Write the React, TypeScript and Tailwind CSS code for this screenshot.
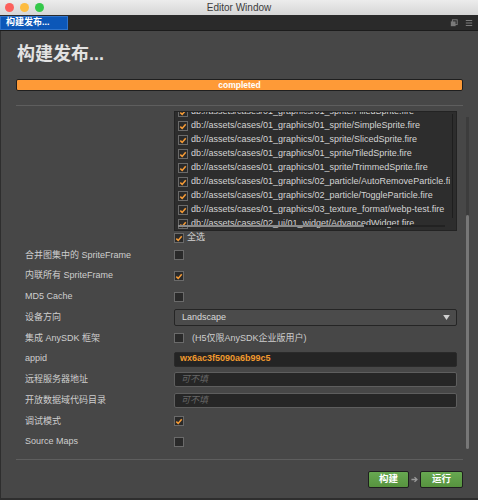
import React from "react";

const files = [
  "db://assets/cases/01_graphics/01_sprite/FilledSprite.fire",
  "db://assets/cases/01_graphics/01_sprite/SimpleSprite.fire",
  "db://assets/cases/01_graphics/01_sprite/SlicedSprite.fire",
  "db://assets/cases/01_graphics/01_sprite/TiledSprite.fire",
  "db://assets/cases/01_graphics/01_sprite/TrimmedSprite.fire",
  "db://assets/cases/01_graphics/02_particle/AutoRemoveParticle.fire",
  "db://assets/cases/01_graphics/02_particle/ToggleParticle.fire",
  "db://assets/cases/01_graphics/03_texture_format/webp-test.fire",
  "db://assets/cases/02_ui/01_widget/AdvancedWidget.fire",
];

const Check = ({ checked }: { checked?: boolean }) => (
  <span className="flex h-[10px] w-[10px] shrink-0 items-center justify-center border border-[#6a6a6a] bg-[#2a2a2a]">
    {checked && (
      <svg viewBox="0 0 10 10" className="h-[9px] w-[9px]">
        <path d="M1.6 5.2 L4 7.4 L8.4 2.2" stroke="#f59b36" strokeWidth="1.9" fill="none" />
      </svg>
    )}
  </span>
);

const Row = ({ label, children }: { label: string; children?: React.ReactNode }) => (
  <div className="flex h-[20.75px] items-center">
    <div className="w-[158px] pl-[9px] text-[9px] text-[#cecece]">{label}</div>
    <div className="flex flex-1 items-center pr-[7px]">{children}</div>
  </div>
);

export default function App() {
  return (
    <div className="flex h-[500px] w-[478px] flex-col overflow-hidden bg-[#474747] font-['Liberation_Sans','Noto_Sans_CJK_SC',sans-serif]">
      {/* title bar */}
      <div className="relative flex h-[15px] items-center justify-center bg-gradient-to-b from-[#ececec] to-[#d6d6d6]">
        <div className="absolute left-[5px] top-[3px] flex gap-[6px]">
          <span className="h-[9px] w-[9px] rounded-full bg-[#fc605c]" />
          <span className="h-[9px] w-[9px] rounded-full bg-[#fdbc40]" />
          <span className="h-[9px] w-[9px] rounded-full bg-[#34c84a]" />
        </div>
        <span className="text-[10px] text-[#3c3c3c]">Editor Window</span>
      </div>

      {/* tab bar */}
      <div className="flex h-[16px] items-stretch border-b border-[#1c1c1c] bg-[#2a2a2a]">
        <div className="mt-px flex w-[68px] items-center border border-[#2f74cc] bg-[#0c57b8] pl-[5px] text-[9px] font-bold text-white">
          构建发布...
        </div>
        <div className="ml-auto flex items-center gap-[7px] pr-[5px]">
          <svg viewBox="0 0 10 10" className="h-[8px] w-[8px]">
            <rect x="3" y="1" width="6" height="6" fill="none" stroke="#7a7a7a" strokeWidth="1.2" />
            <rect x="1" y="3" width="6" height="6" fill="#7a7a7a" />
          </svg>
          <svg viewBox="0 0 10 10" className="h-[8px] w-[8px]">
            <path d="M1 2 H9 M1 5 H9 M1 8 H9" stroke="#7a7a7a" strokeWidth="1.3" />
          </svg>
        </div>
      </div>

      {/* panel */}
      <div className="flex flex-1 flex-col border-l border-[#2e2e2e]">
        <div className="px-[15px]">
          <div className="pt-[12px] pl-px text-[18px] font-bold leading-[22px] text-[#e2e2e2]">构建发布...</div>
          <div className="mt-[14px] flex h-[12px] items-center justify-center rounded-[2px] border border-[#1f1f1f] bg-[#fe9a37] text-[8.5px] font-bold text-white">
            completed
          </div>
          <div className="mt-[14px] h-px bg-[#5e5e5e]" />
        </div>

        {/* scroll region */}
        <div className="flex h-[353px] overflow-hidden pl-[15px]">
          <div className="w-[448px]">
            <div className="mt-[5px] flex">
              <div className="w-[158px]" />
              <div className="relative h-[120px] w-[283px] overflow-hidden border border-[#232323] bg-[#2d2d2d]">
                <div className="mt-[-7px] w-[275px] overflow-hidden">
                  {files.map((f) => (
                    <div key={f} className="flex h-[14px] items-center gap-[3px] pl-[3px]">
                      <Check checked />
                      <span className="whitespace-nowrap text-[9px] text-[#d4d4d4]">{f}</span>
                    </div>
                  ))}
                </div>
                <div className="absolute right-[3px] top-[2px] h-[104px] w-px bg-[#1e1e1e]" />
                <div className="absolute bottom-[3px] left-[3px] flex h-[2px] w-[267px] bg-[#222]">
                  <div className="h-full w-[186px] bg-[#8a8a8a]" />
                </div>
              </div>
            </div>

            <div className="flex h-[14px] items-center">
              <div className="w-[158px]" />
              <Check checked />
              <span className="ml-[3px] text-[9px] text-[#d4d4d4]">全选</span>
            </div>

            <Row label="合并图集中的 SpriteFrame">
              <Check />
            </Row>
            <Row label="内联所有 SpriteFrame">
              <Check checked />
            </Row>
            <Row label="MD5 Cache">
              <Check />
            </Row>
            <Row label="设备方向">
              <div className="flex h-[17px] flex-1 items-center justify-between rounded-[2px] border border-[#252525] bg-[#4b4b4b] pl-[7px] pr-[6px]">
                <span className="text-[9px] text-[#d8d8d8]">Landscape</span>
                <svg viewBox="0 0 8 6" className="h-[5px] w-[7px]">
                  <path d="M0 0 H8 L4 6 Z" fill="#d0d0d0" />
                </svg>
              </div>
            </Row>
            <Row label="集成 AnySDK 框架">
              <Check />
              <span className="ml-[8px] text-[9px] text-[#cecece]">(H5仅限AnySDK企业版用户)</span>
            </Row>
            <Row label="appid">
              <div className="flex h-[15px] flex-1 items-center rounded-[2px] border border-[#2a2a2a] bg-[#242424] pl-[5px] text-[9px] font-bold text-[#f29a2e]">
                wx6ac3f5090a6b99c5
              </div>
            </Row>
            <Row label="远程服务器地址">
              <div className="flex h-[15px] flex-1 items-center rounded-[2px] border border-[#5e5e5e] bg-[#262626] pl-[6px] text-[9px] italic text-[#666]">
                可不填
              </div>
            </Row>
            <Row label="开放数据域代码目录">
              <div className="flex h-[15px] flex-1 items-center rounded-[2px] border border-[#5e5e5e] bg-[#262626] pl-[6px] text-[9px] italic text-[#666]">
                可不填
              </div>
            </Row>
            <Row label="调试模式">
              <Check checked />
            </Row>
            <Row label="Source Maps">
              <Check />
            </Row>
          </div>

          {/* page scrollbar */}
          <div className="ml-[2px] flex w-[3px] flex-col pb-[10px] pt-[11px]">
            <div className="flex-1 bg-[#3c3c3c]" />
            <div className="h-[234px] rounded-full bg-[#777]" />
          </div>
        </div>

        <div className="mx-[15px] h-px bg-[#5e5e5e]" />

        {/* footer */}
        <div className="flex h-[38px] items-center justify-end pr-[15px]">
          <button className="flex h-[17px] w-[41px] items-center justify-center rounded-[2px] border border-[#1f1f1f] bg-gradient-to-b from-[#67a851] to-[#57933f] text-[9.5px] font-bold text-white">
            构建
          </button>
          <svg viewBox="0 0 8 8" className="mx-[2px] h-[7px] w-[7px]">
            <path d="M0.5 4 H6.5 M4 1.3 L6.8 4 L4 6.7" stroke="#9a9a9a" strokeWidth="1.5" fill="none" />
          </svg>
          <button className="flex h-[17px] w-[43px] items-center justify-center rounded-[2px] border border-[#1f1f1f] bg-gradient-to-b from-[#67a851] to-[#57933f] text-[9.5px] font-bold text-white">
            运行
          </button>
        </div>
        <div className="h-[2px] bg-[#2e2e2e]" />
      </div>
    </div>
  );
}
